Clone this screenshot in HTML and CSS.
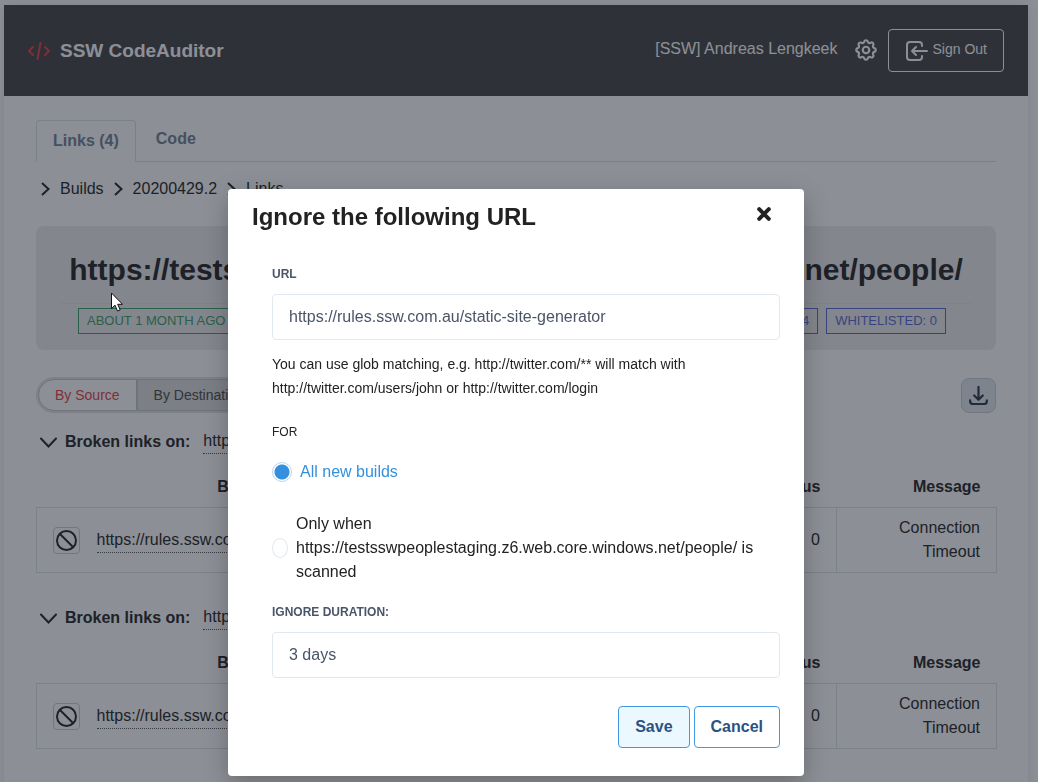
FILE: index.html
```html
<!DOCTYPE html>
<html lang="en">
<head>
<meta charset="utf-8">
<title>SSW CodeAuditor</title>
<link rel="stylesheet" href="styles.css">
</head>
<body>
<div class="app">
  <header class="topbar">
    <a class="brand" href="#">
      <svg width="22" height="18" viewBox="0 0 22 18" fill="none" stroke="#e53e3e" stroke-width="2" stroke-linecap="round" stroke-linejoin="round"><path d="M5 5 1 9l4 4M17 5l4 4-4 4M12.500 1 9.500 17"/></svg>
      SSW CodeAuditor
    </a>
    <div class="account">
      <span class="user">[SSW] Andreas Lengkeek</span>
      <a class="settings" href="#" aria-label="Settings">
        <svg width="26" height="26" viewBox="0 0 24 24" fill="none" stroke="currentColor" stroke-width="2" stroke-linejoin="round"><path d="M10.300 4.300c.4-1.750 2.950-1.750 3.400 0a1.700 1.700 0 0 0 2.550 1.050c1.550-.94 3.300.83 2.400 2.400a1.700 1.700 0 0 0 1.050 2.550c1.750.45 1.750 2.950 0 3.400a1.700 1.700 0 0 0-1.050 2.550c.94 1.550-.83 3.300-2.400 2.400a1.700 1.700 0 0 0-2.550 1.050c-.45 1.750-2.950 1.750-3.400 0a1.700 1.700 0 0 0-2.550-1.050c-1.550.94-3.300-.83-2.400-2.400a1.700 1.700 0 0 0-1.050-2.550c-1.750-.45-1.750-2.950 0-3.400a1.700 1.700 0 0 0 1.050-2.550c-.94-1.550.83-3.300 2.400-2.400a1.700 1.700 0 0 0 2.550-1.050z"/><circle cx="12" cy="12" r="3"/></svg>
      </a>
      <button class="signout" type="button">
        <svg width="22" height="20" viewBox="0 0 22 20" fill="none" stroke="currentColor" stroke-width="2" stroke-linecap="round" stroke-linejoin="round"><path d="M16 5V4a3 3 0 0 0-3-3H4a3 3 0 0 0-3 3v12a3 3 0 0 0 3 3h9a3 3 0 0 0 3-3v-1M21 10H6M10 6l-4 4 4 4"/></svg>
        <span class="signout-text">Sign Out</span>
      </button>
    </div>
  </header>

  <main class="content">
    <nav class="tabs">
      <a class="tab tab-active" href="#">Links (4)</a>
      <a class="tab" href="#">Code</a>
    </nav>

    <nav class="crumbs" aria-label="Breadcrumb">
      <svg class="crumb-arrow" width="9" height="14" viewBox="0 0 9 14"><path d="m1 1 6.500 6L1 13"/></svg>
      <a href="#">Builds</a>
      <svg class="crumb-arrow" width="9" height="14" viewBox="0 0 9 14"><path d="m1 1 6.500 6L1 13"/></svg>
      <a href="#">20200429.2</a>
      <svg class="crumb-arrow" width="9" height="14" viewBox="0 0 9 14"><path d="m1 1 6.500 6L1 13"/></svg>
      <a href="#">Links</a>
    </nav>

    <section class="summary">
      <h1 class="summary-title">https://testsswpeoplestaging.z6.web.core.windows.net/people/</h1>
      <div class="badges">
        <span class="badge badge-green">ABOUT 1 MONTH AGO</span>
        <span class="badge badge-blue badge-push">LINKS: 4</span>
        <span class="badge badge-blue">WHITELISTED: 0</span>
      </div>
    </section>

    <div class="toolbar">
      <div class="toggle">
        <button class="toggle-item toggle-on" type="button">By Source</button>
        <button class="toggle-item" type="button">By Destination</button>
      </div>
      <button class="download" type="button" aria-label="Download">
        <svg width="19" height="19" viewBox="0 0 20 20" fill="none" stroke="currentColor" stroke-width="2.300" stroke-linecap="round" stroke-linejoin="round"><path d="M10 1v13M5.500 10l4.500 4.500L14.500 10M1.200 15v1a3 3 0 0 0 3 3h11.600a3 3 0 0 0 3-3v-1"/></svg>
      </button>
    </div>

    <section class="group">
      <h2 class="group-head">
        <svg class="group-arrow" width="17" height="11" viewBox="0 0 17 11" fill="none" stroke="currentColor" stroke-width="2" stroke-linecap="round"><path d="m1 1.500 7.500 8 7.500-8"/></svg>
        <span>Broken links on:</span>
        <a class="link group-link" href="#">https://testsswpeoplestaging.z6.web.core.windows.net/people/</a>
      </h2>
      <table class="results">
        <thead><tr><th class="col-icon"></th><th class="col-link">Broken Link</th><th class="num">Status</th><th class="col-message num">Message</th></tr></thead>
        <tbody><tr>
          <td class="col-icon"><button class="ignore" type="button" aria-label="Ignore"><svg width="21" height="21" viewBox="0 0 21 21" fill="none" stroke="currentColor" stroke-width="2"><circle cx="10.500" cy="10.500" r="9.500"/><path d="m4 4 13 13"/></svg></button></td>
          <td><a class="link" href="#">https://rules.ssw.com.au/static-site-generator</a></td>
          <td class="num">0</td>
          <td class="col-message num">Connection Timeout</td>
        </tr></tbody>
      </table>
    </section>

    <section class="group">
      <h2 class="group-head">
        <svg class="group-arrow" width="17" height="11" viewBox="0 0 17 11" fill="none" stroke="currentColor" stroke-width="2" stroke-linecap="round"><path d="m1 1.500 7.500 8 7.500-8"/></svg>
        <span>Broken links on:</span>
        <a class="link group-link" href="#">https://testsswpeoplestaging.z6.web.core.windows.net/people/</a>
      </h2>
      <table class="results">
        <thead><tr><th class="col-icon"></th><th class="col-link">Broken Link</th><th class="num">Status</th><th class="col-message num">Message</th></tr></thead>
        <tbody><tr>
          <td class="col-icon"><button class="ignore" type="button" aria-label="Ignore"><svg width="21" height="21" viewBox="0 0 21 21" fill="none" stroke="currentColor" stroke-width="2"><circle cx="10.500" cy="10.500" r="9.500"/><path d="m4 4 13 13"/></svg></button></td>
          <td><a class="link" href="#">https://rules.ssw.com.au/static-site-generator</a></td>
          <td class="num">0</td>
          <td class="col-message num">Connection Timeout</td>
        </tr></tbody>
      </table>
    </section>
  </main>
</div>

<div class="overlay">
  <form class="modal" role="dialog" aria-modal="true" aria-labelledby="modal-title">
    <div class="modal-head">
      <h2 class="modal-title" id="modal-title">Ignore the following URL</h2>
      <button class="close" type="button" aria-label="Close">
        <svg width="14" height="14" viewBox="0 0 14 14" stroke="#222" stroke-width="4" stroke-linecap="round"><path d="m2.200 2.200 9.600 9.600M11.800 2.200l-9.600 9.600"/></svg>
      </button>
    </div>
    <div class="modal-body">
      <label class="label" for="url">URL</label>
      <input class="field" id="url" type="text" value="https://rules.ssw.com.au/static-site-generator">
      <p class="help">You can use glob matching, e.g. http://twitter.com/** will match with http://twitter.com/users/john or http://twitter.com/login</p>
      <div class="label label-plain">FOR</div>
      <label class="option option-on"><input class="radio" type="radio" name="scope" checked><span>All new builds</span></label>
      <label class="option option-wide"><input class="radio" type="radio" name="scope"><span>Only when https://testsswpeoplestaging.z6.web.core.windows.net/people/ is scanned</span></label>
      <label class="label label-duration" for="duration">IGNORE DURATION:</label>
      <select class="field" id="duration"><option>3 days</option></select>
      <div class="actions">
        <button class="btn btn-primary" type="button">Save</button>
        <button class="btn" type="button">Cancel</button>
      </div>
    </div>
  </form>
</div>

<svg class="pointer" width="12" height="20" viewBox="0 0 12 20"><path d="M.5 1v15.500l3.500-3.300 2.500 5.800 2.700-1.100-2.500-5.600h4.800z" fill="#fff" stroke="#111"/></svg>
</body>
</html>
```

FILE: styles.css
```css
* { box-sizing: border-box; }

body {
  margin: 0;
  min-height: 100vh;
  overflow: hidden;
  background: #fff;
  color: #222;
  font: 16px/24px "Liberation Sans", Arial, sans-serif;
}

h1, h2, p { margin: 0; }
a { color: inherit; text-decoration: none; }
button, input, select { font: inherit; color: inherit; }
button { cursor: pointer; }
svg { display: block; flex: none; }

.app {
  margin: 5px 10px 0 4px;
  min-height: 100vh;
  box-shadow: 0 0 12px rgba(0, 0, 0, .1);
}

/* Top bar */
.topbar {
  display: flex;
  justify-content: space-between;
  align-items: center;
  padding: 24px;
  background: #434345;
  color: #fff;
}
.brand {
  display: flex;
  align-items: center;
  gap: 10px;
  font-size: 19px;
  font-weight: 700;
}
.account { display: flex; align-items: center; }
.user { padding-bottom: 4px; }
.settings { margin: 0 9px 0 15px; padding-bottom: 2px; }
.signout {
  display: flex;
  align-items: center;
  gap: 5px;
  height: 43px;
  padding: 0 16px 0 17px;
  border: 1px solid #fff;
  border-radius: 4px;
  background: none;
  font-size: 14px;
}
.signout-text { padding-bottom: 3px; }

/* Page content */
.content { padding: 24px 32px; }

.tabs {
  display: flex;
  border-bottom: 1px solid #d8e0ea;
}
.tab {
  padding: 7px 20px;
  color: #718096;
  font-weight: 700;
}
.tab-active {
  margin-bottom: -1px;
  padding: 8px 16px;
  border: 1px solid #d8e0ea;
  border-bottom-color: #fff;
  border-radius: 4px 4px 0 0;
}

.crumbs {
  display: flex;
  align-items: center;
  gap: 10px;
  padding: 15px 6px 0 5px;
}
.crumb-arrow { fill: none; stroke: currentColor; stroke-width: 2; }

.summary {
  margin-top: 25px;
  padding: 20px 24px 16px;
  border-radius: 8px;
  background: #ededed;
}
.summary-title {
  padding-bottom: 9px;
  border-bottom: 1px solid #e4e4e4;
  font-size: 30px;
  line-height: 48px;
  text-align: center;
  white-space: nowrap;
}
.badges {
  display: flex;
  gap: 8px;
  margin-top: 4px;
  padding: 0 26px 0 18px;
}
.badge {
  padding: 0 8px;
  border: 1px solid;
  font-size: 13px;
  line-height: 24px;
}
.badge-green { color: #38a169; }
.badge-blue { color: #5a67d8; }
.badge-push { margin-left: auto; }

.toolbar {
  display: flex;
  justify-content: space-between;
  align-items: center;
  margin-top: 27px;
}
.toggle {
  display: flex;
  padding: 2px;
  border-radius: 18px;
  background: #e2e2e4;
}
.toggle-item {
  height: 32px;
  padding: 0 16px;
  border: 1px solid #c4c6ca;
  border-radius: 0 16px 16px 0;
  background: #dedede;
  color: #4a4a4a;
  font-size: 14px;
}
.toggle-on {
  border-radius: 16px 0 0 16px;
  background: #fff;
  color: #e53e3e;
}
.download {
  display: grid;
  place-items: center;
  width: 35px;
  height: 35px;
  padding: 0;
  border: 1px solid #ccc;
  border-radius: 8px;
  background: #e2e8f0;
  color: #2d3748;
}

/* Broken link groups */
.group { margin: 16px 0 32px; }
.group + .group { margin-top: 0; }
.group-head {
  display: flex;
  align-items: center;
  gap: 8px;
  padding: 0 4px 13px;
  font-size: 16px;
}
.group-arrow { margin-top: 2px; }
.link { display: inline-block; border-bottom: 1px dotted #555; }
.group-link { margin-left: 5px; font-weight: 400; }

.results {
  width: calc(100% + 1px);
  border-collapse: collapse;
}
.results th { padding: 8px 16px; }
.results td { padding: 8px 16px; }
.results tbody tr { border: 1px solid #dce1e8; }
.results .col-icon { width: 44px; padding-right: 0; }
.results .col-link { width: 366px; }
.results .num { text-align: right; }
.results .col-message { width: 160px; }
.results td.col-message { border-left: 1px solid #dce1e8; }
.ignore {
  display: grid;
  place-items: center;
  width: 27px;
  height: 27px;
  padding: 0;
  border: 1px solid #ccc;
  border-radius: 4px;
  background: none;
}

/* Dialog */
.overlay {
  position: fixed;
  inset: 0;
  display: flex;
  justify-content: center;
  align-items: flex-end;
  padding: 0 6px 6px 0;
  background: rgba(26, 32, 44, .5);
}
.modal {
  width: 100%;
  max-width: 576px;
  border-radius: 4px;
  background: #fff;
  box-shadow: 0 8px 24px rgba(0, 0, 0, .25);
}
.modal-head {
  display: flex;
  justify-content: space-between;
  align-items: flex-start;
  padding: 12px 33px 0 24px;
}
.modal-title { font-size: 24px; line-height: 32px; }
.close {
  padding: 6px 0 0;
  border: 0;
  background: none;
}
.modal-body { padding: 32px 24px 28px 44px; }
.label {
  display: block;
  margin-bottom: 11px;
  color: #4a5568;
  font-size: 12px;
  font-weight: 700;
  line-height: 18px;
}
.label-plain {
  margin: 23px 0 19px;
  color: #222;
  font-weight: 400;
}
.label-duration { margin-top: 19px; }
.field {
  display: block;
  width: 100%;
  height: 46px;
  padding: 0 16px;
  border: 1px solid #e2e8f0;
  border-radius: 4px;
  background: #fff;
  color: #4a5568;
  appearance: none;
}
.help { margin-top: 12px; font-size: 14px; }

.option {
  display: flex;
  align-items: center;
  gap: 8px;
}
.option-on { color: #3490dc; }
.option-wide { margin-top: 28px; }
.radio {
  flex: none;
  width: 20px;
  height: 20px;
  margin: 0;
  border: 1px solid #e2e8f0;
  border-radius: 50%;
  appearance: none;
}
.radio:checked {
  border-color: #b9d6f2;
  background: radial-gradient(circle, #3490dc 7px, #fff 8px);
}
.option-wide .radio { width: 16px; }

.actions {
  display: flex;
  justify-content: flex-end;
  gap: 4px;
  margin-top: 28px;
}
.btn {
  height: 42px;
  padding: 0 16px;
  border: 1px solid #4299e1;
  border-radius: 4px;
  background: #fff;
  color: #2c5282;
  font-weight: 700;
}
.btn-primary { background: #ebf8ff; }

.pointer {
  position: absolute;
  top: 292px;
  left: 111px;
}
```
